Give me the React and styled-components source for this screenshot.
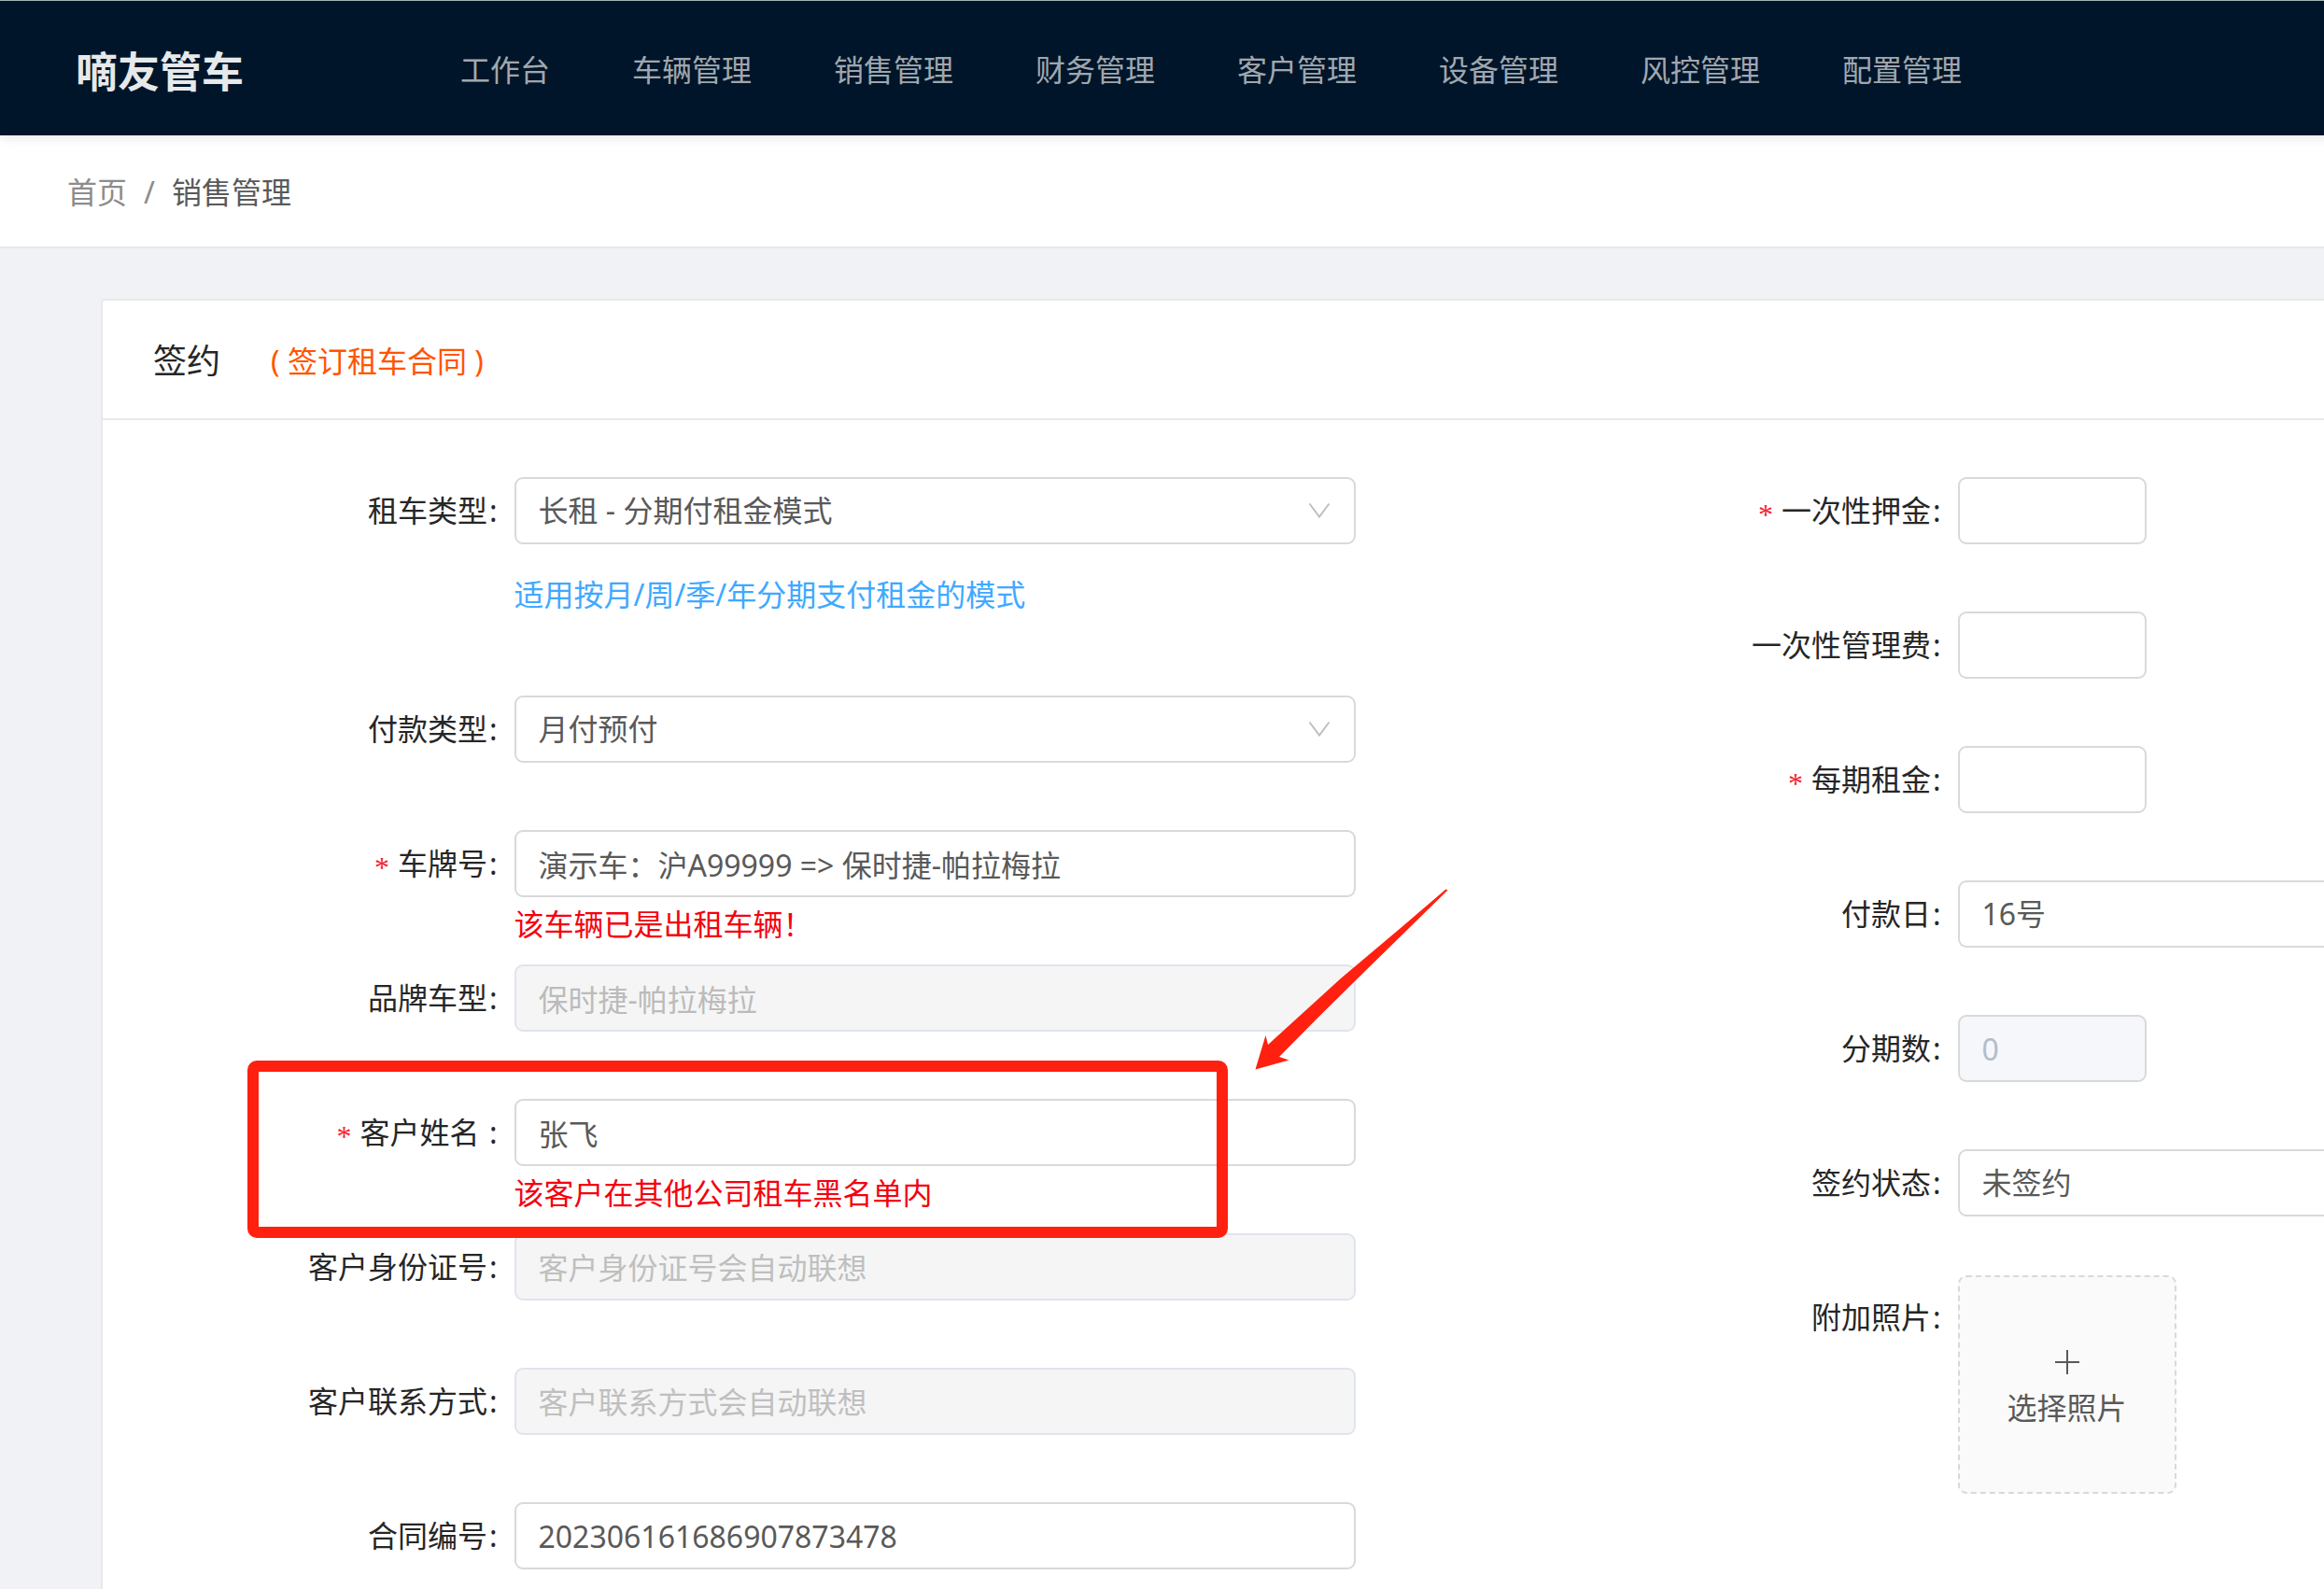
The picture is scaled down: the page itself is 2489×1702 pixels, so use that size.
import React from 'react'
import styled, { createGlobalStyle } from 'styled-components'

const GlobalStyle = createGlobalStyle`
  * {
    box-sizing: border-box;
  }
  body {
    margin: 0;
    background: #f0f2f5;
    color: #262626;
    font-family: "Noto Sans", "Noto Sans CJK SC", sans-serif;
    font-size: 32px;
    line-height: 40px;
  }
  input, select, button {
    font: inherit;
  }
`;

const Page = styled.div`
  height: 100vh;
  overflow: hidden;
`;

// the two form columns need a wide desk, smaller windows just cut it off
const Desk = styled.div`
  min-width: 3420px;
`;

const Header = styled.header`
  position: relative;
  height: 145px;
  display: flex;
  align-items: center;
  padding: 3px 81px 0;
  background: #001529;
  border-top: 1px solid #a3b5b4;
  box-shadow: 0 2px 12px rgba(0, 0, 0, 0.1);
`;

const Logo = styled.div`
  width: 412px;
  color: #e6e8ea;
  font-family: "Noto Sans CJK SC", sans-serif;
  font-size: 45px;
  font-weight: bold;
`;

const Nav = styled.nav`
  display: flex;
  gap: 88px;
`;

const NavLink = styled.a`
  color: rgba(255, 255, 255, 0.65);
  text-decoration: none;
  &:hover {
    color: #fff;
  }
`;

const Breadcrumb = styled.nav`
  height: 121px;
  display: flex;
  align-items: center;
  gap: 18px;
  padding: 2px 72px 0;
  background: #fff;
  border-bottom: 2px solid #e8e8e8;
  color: #8c8c8c;
`;

const Crumb = styled.a`
  color: ${({ $current }) => ($current ? '#595959' : '#8c8c8c')};
  text-decoration: none;
`;

const Card = styled.section`
  margin: 54px 108px;
  background: #fff;
  border: 2px solid #e8e8e8;
  border-radius: 4px;
`;

const CardHead = styled.div`
  height: 128px;
  display: flex;
  align-items: center;
  gap: 54px;
  padding: 3px 54px 0;
  border-bottom: 2px solid #e8e8e8;
`;

const Title = styled.h1`
  margin: 0;
  font-size: 36px;
  font-weight: normal;
`;

const SubTitle = styled.span`
  color: #ff5500;
`;

const Form = styled.form`
  display: grid;
  grid-template-columns: 1fr 1fr;
  align-items: start;
  padding: 52px 54px 0;
`;

const Item = styled.div`
  position: relative;
  display: grid;
  grid-template-columns: 3fr 7fr 2fr;
  min-height: 144px;
`;

const Label = styled.label`
  display: flex;
  justify-content: flex-end;
  padding-right: 18px;
  line-height: 90px;
  white-space: pre;
  &::after {
    content: ':';
    margin-left: 2px;
  }
`;

const Star = styled.span`
  margin-right: 9px;
  padding-top: 4px;
  color: #f5222d;
  font-family: "Liberation Serif", serif;
`;

const Control = styled.div`
  padding-top: 9px;
`;

const Input = styled.input`
  display: block;
  width: ${({ $short }) => ($short ? '202px' : '100%')};
  height: 72px;
  padding: 0 24px;
  background: #fff;
  border: 2px solid #d9d9d9;
  border-radius: 9px;
  color: #595959;
  &::placeholder {
    color: #bfbfbf;
  }
  &:disabled {
    background: ${({ $short }) => ($short ? '#f5f7fa' : '#f5f5f5')};
    border-color: ${({ $short }) => ($short ? '#d9d9d9' : '#dfe4ed')};
    color: ${({ $short }) => ($short ? '#b4bccc' : '#bbbbbb')};
  }
`;

const SelectBox = styled.div`
  position: relative;
`;

const SelectInput = styled.select`
  display: block;
  width: 100%;
  height: 72px;
  padding: 0 24px;
  appearance: none;
  background: #fff;
  border: 2px solid #d9d9d9;
  border-radius: 9px;
  color: #595959;
`;

const Arrow = styled.svg`
  position: absolute;
  right: 27px;
  top: 24px;
  width: 24px;
  height: 24px;
  pointer-events: none;
`;

const Hint = styled.div`
  padding-top: 9px;
  margin-bottom: 54px;
  color: #40a9ff;
  line-height: 90px;
`;

const ErrorText = styled.div`
  margin-top: 9px;
  color: #f5000f;
`;

const Upload = styled.button`
  width: 234px;
  height: 234px;
  display: flex;
  flex-direction: column;
  align-items: center;
  justify-content: center;
  gap: 16px;
  margin-top: -9px;
  padding-top: 8px;
  background: #fafafa;
  border: 2px dashed #d9d9d9;
  border-radius: 9px;
  color: #595959;
`;

const Mark = styled.div`
  position: absolute;
  z-index: 1;
  left: 101px;
  top: -32px;
  width: 1050px;
  height: 190px;
  border: 12px solid #ff2010;
  border-radius: 10px;
  pointer-events: none;
`;

const MarkArrow = styled.svg`
  position: absolute;
  z-index: 1;
  left: 1180px;
  top: -216px;
  width: 208px;
  height: 194px;
  pointer-events: none;
`;

const menus = ['工作台', '车辆管理', '销售管理', '财务管理', '客户管理', '设备管理', '风控管理', '配置管理'];

const Field = ({ id, label, required, children }) => (
  <Item>
    <Label htmlFor={id}>
      {required && <Star>*</Star>}
      {label}
    </Label>
    <Control>{children}</Control>
  </Item>
);

const Select = ({ id, options }) => (
  <SelectBox>
    <SelectInput id={id}>
      {options.map((o) => <option key={o}>{o}</option>)}
    </SelectInput>
    <Arrow viewBox="0 0 24 24" fill="none" stroke="#bfbfbf" strokeWidth="2">
      <path d="M1.5 4.5 L12 18.5 L22.5 4.5" />
    </Arrow>
  </SelectBox>
);

const App = () => {
  return (
    <Page>
      <GlobalStyle />
      <Desk>
        <Header>
          <Logo>嘀友管车</Logo>
          <Nav>
            {menus.map((m) => <NavLink key={m} href="#">{m}</NavLink>)}
          </Nav>
        </Header>
        <Breadcrumb>
          <Crumb href="#">首页</Crumb>
          <span>/</span>
          <Crumb href="#" $current>销售管理</Crumb>
        </Breadcrumb>
        <Card>
          <CardHead>
            <Title>签约</Title>
            <SubTitle>( 签订租车合同 )</SubTitle>
          </CardHead>
          <Form>
            <div>
              <Field id="rentType" label="租车类型">
                <Select id="rentType" options={['长租 - 分期付租金模式']} />
                <Hint>适用按月/周/季/年分期支付租金的模式</Hint>
              </Field>
              <Field id="payType" label="付款类型">
                <Select id="payType" options={['月付预付']} />
              </Field>
              <Field id="plate" label="车牌号" required>
                <Input id="plate" defaultValue="演示车：沪A99999 => 保时捷-帕拉梅拉" />
                <ErrorText>该车辆已是出租车辆！</ErrorText>
              </Field>
              <Field id="model" label="品牌车型">
                <Input id="model" defaultValue="保时捷-帕拉梅拉" disabled />
              </Field>
              <Item>
                <Label htmlFor="customer">
                  <Star>*</Star>
                  {'客户姓名 '}
                </Label>
                <Control>
                  <Input id="customer" defaultValue="张飞" />
                  <ErrorText>该客户在其他公司租车黑名单内</ErrorText>
                </Control>
                <Mark />
                <MarkArrow viewBox="0 0 208 194" fill="#ff2010">
                  <path d="M204.5 0.5 L206.5 1.5 L108 98 L69.5 136 L26 180 L36.5 183.5 L0.5 193.5 L11.5 157 L14 167 L92 96 L159 39.5 Z" />
                </MarkArrow>
              </Item>
              <Field id="idNo" label="客户身份证号">
                <Input id="idNo" placeholder="客户身份证号会自动联想" disabled />
              </Field>
              <Field id="phone" label="客户联系方式">
                <Input id="phone" placeholder="客户联系方式会自动联想" disabled />
              </Field>
              <Field id="contract" label="合同编号">
                <Input id="contract" defaultValue="202306161686907873478" />
              </Field>
            </div>
            <div>
              <Field id="deposit" label="一次性押金" required>
                <Input id="deposit" $short />
              </Field>
              <Field id="fee" label="一次性管理费">
                <Input id="fee" $short />
              </Field>
              <Field id="rent" label="每期租金" required>
                <Input id="rent" $short />
              </Field>
              <Field id="payDay" label="付款日">
                <Select id="payDay" options={['16号']} />
              </Field>
              <Field id="periods" label="分期数">
                <Input id="periods" defaultValue="0" $short disabled />
              </Field>
              <Field id="status" label="签约状态">
                <Select id="status" options={['未签约']} />
              </Field>
              <Field id="photo" label="附加照片">
                <Upload id="photo" type="button">
                  <svg width="26" height="26" viewBox="0 0 26 26" stroke="#595959" strokeWidth="2">
                    <path d="M13 0 V26 M0 13 H26" />
                  </svg>
                  选择照片
                </Upload>
              </Field>
            </div>
          </Form>
        </Card>
      </Desk>
    </Page>
  );
};

export default App;
